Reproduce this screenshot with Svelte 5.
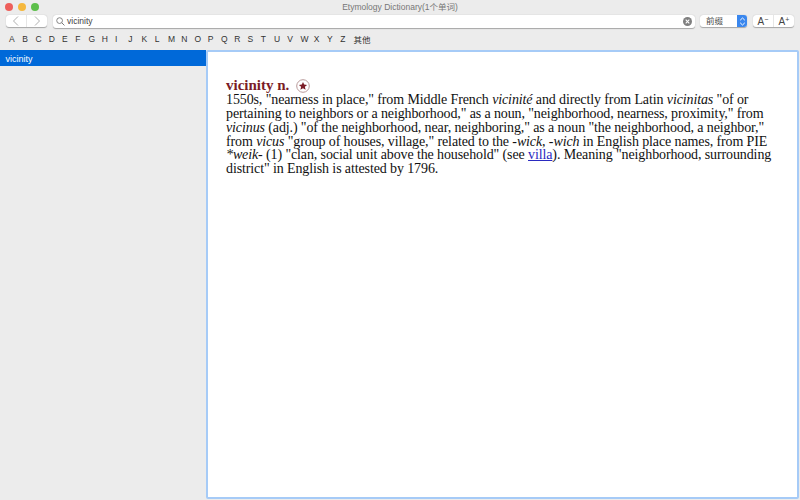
<script>
  const letters = 'ABCDEFGHIJKLMNOPQRSTUVWXYZ'.split('');
</script>

<div class="win">
  <header class="title"><span class="lights"><i class="r"></i><i class="y"></i><i class="g"></i></span><span class="ttl">Etymology Dictionary(1个单词)</span></header>
  <div class="toolbar">
    <div class="seg nav">
      <span class="cell"><svg width="8" height="12" viewBox="0 0 8 12"><path d="M6 1.5 1.5 6 6 10.5" fill="none" stroke="#b0b0b0" stroke-width="1"/></svg></span>
      <span class="cell"><svg width="8" height="12" viewBox="0 0 8 12"><path d="M2 1.5 6.5 6 2 10.5" fill="none" stroke="#b0b0b0" stroke-width="1"/></svg></span>
    </div>
    <div class="search">
      <svg width="9" height="9" viewBox="0 0 10 10"><circle cx="4" cy="4" r="3.2" fill="none" stroke="#777" stroke-width="1"/><path d="M6.4 6.4 9.4 9.4" stroke="#777" stroke-width="1.1"/></svg>
      <span class="q">vicinity</span>
      <svg class="clear" width="9" height="9" viewBox="0 0 10 10"><circle cx="5" cy="5" r="5" fill="#7f7f7f"/><path d="M3 3l4 4M7 3l-4 4" stroke="#fff" stroke-width="1.2"/></svg>
    </div>
    <div class="select"><span class="sel">前缀</span><span class="arrows"><svg width="7" height="11" viewBox="0 0 7 11"><path d="M1.2 4.2 3.5 2l2.3 2.2M1.2 6.8 3.5 9l2.3-2.2" fill="none" stroke="#fff" stroke-width="1"/></svg></span></div>
    <div class="seg font">
      <span class="cell">A<sup>−</sup></span>
      <span class="cell">A<sup>+</sup></span>
    </div>
  </div>
  <nav class="alpha">
    {#each letters as l}<span>{l}</span>{/each}<span class="other">其他</span>
  </nav>
  <div class="main">
    <aside><div class="row">vicinity</div></aside>
    <section class="content">
      <div class="head"><span class="word">vicinity n.</span><svg width="14" height="14" viewBox="0 0 14 14"><circle cx="7" cy="7" r="6.3" fill="#fff" stroke="#b99a9a" stroke-width="1"/><path d="M7 2.9l1.2 2.7 2.9.3-2.2 1.9.7 2.9L7 9.2l-2.6 1.5.7-2.9-2.2-1.9 2.9-.3z" fill="#7b1c26"/></svg></div>
      <p>1550s, "nearness in place," from Middle French <em>vicinité</em> and directly from Latin <em>vicinitas</em> "of or<br>pertaining to neighbors or a neighborhood," as a noun, "neighborhood, nearness, proximity," from<br><em>vicinus</em> (adj.) "of the neighborhood, near, neighboring," as a noun "the neighborhood, a neighbor,"<br>from <em>vicus</em> "group of houses, village," related to the <em>-wick</em>, <em>-wich</em> in English place names, from PIE<br><em>*weik-</em> (1) "clan, social unit above the household" (see <a href="#villa">villa</a>). Meaning "neighborhood, surrounding<br>district" in English is attested by 1796.</p>
    </section>
  </div>
</div>

<style>
  :global(body) { margin: 0; }
  .win { width: 800px; height: 500px; background: #ececec; display: flex; flex-direction: column; overflow: hidden; font-family: "Liberation Sans", "Noto Sans CJK SC", sans-serif; color: #333; }
  .title { height: 13px; padding-top: 1px; position: relative; text-align: center; font-size: 8.5px; line-height: 12px; color: #777; }
  .ttl { display: block; }
  .lights { position: absolute; left: 5px; top: 2.5px; display: flex; gap: 5px; }
  .lights i { width: 8px; height: 8px; border-radius: 50%; }
  .r { background: #ee5f5b; } .y { background: #f5b83d; } .g { background: #5dbf4b; }
  .toolbar { height: 14px; padding: 0 5px 0 6px; display: flex; align-items: center; }
  .seg { display: flex; background: #fff; border-radius: 3px; box-shadow: 0 0.5px 1px rgba(0,0,0,.3); height: 12px; flex: none; }
  .nav { width: 41px; }
  .cell { flex: 1; display: flex; align-items: center; justify-content: center; font-size: 10px; color: #444; }
  .cell + .cell { border-left: 1px solid #e6e6e6; }
  .search { margin-left: 6px; width: 642px; flex: none; box-sizing: border-box; height: 13px; background: #fff; border-radius: 3px; box-shadow: 0 0.5px 1px rgba(0,0,0,.3); display: flex; align-items: center; padding: 0 3px; gap: 2px; font-size: 8.5px; color: #444; }
  .q { flex: 1; }
  .select { margin-left: 5px; width: 47px; height: 12px; flex: none; background: #fff; border-radius: 3px; box-shadow: 0 0.5px 1px rgba(0,0,0,.3); display: flex; font-size: 8.5px; color: #444; }
  .sel { flex: 1; padding-left: 6px; line-height: 12px; }
  .arrows { width: 10px; background: #3a87ee; border-radius: 0 3px 3px 0; display: flex; align-items: center; justify-content: center; }
  .font { margin-left: 6px; width: 41px; }
  .font sup { font-size: 7px; line-height: 1; align-self: flex-start; margin-top: 1px; }
  .alpha { height: 22px; display: flex; align-items: center; padding-left: 9px; font-size: 8.5px; color: #333; }
  .alpha span { width: 13.25px; flex: none; }
  .alpha .other { width: auto; }
  .main { flex: 1; display: flex; min-height: 0; padding: 0 1px 1px 0; }
  aside { width: 206px; flex: none; background: #ececec; }
  .row { height: 14px; padding: 2px 0 0 5.5px; background: #0069d9; color: #fff; font-size: 9px; line-height: 14px; }
  .content { flex: 1; background: #fff; border: 2px solid #a6cbf7; border-radius: 2px; padding: 27px 0 0 18px; font-family: "Liberation Serif", serif; color: #111; font-size: 14px; letter-spacing: -0.115px; line-height: 13.85px; }
  .head { display: flex; align-items: center; gap: 7px; height: 14px; }
  .word { font-weight: 700; color: #7b1c26; font-size: 15px; letter-spacing: 0; }
  p { margin: 0; white-space: nowrap; }
  a { color: #2a2ac0; }
</style>
